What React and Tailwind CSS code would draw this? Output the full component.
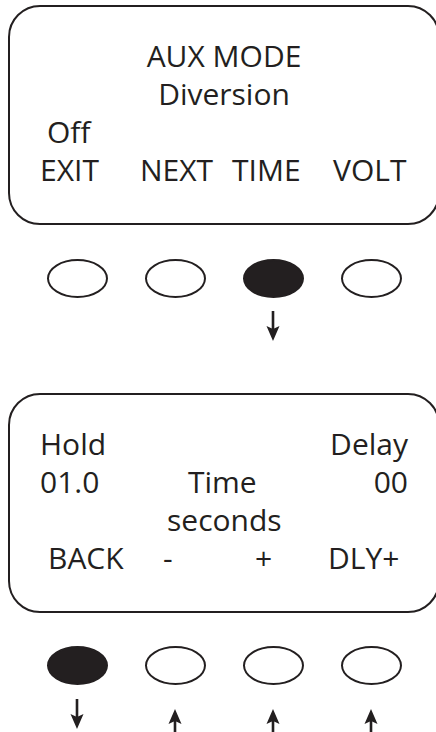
const ink = "#231f20";

function Key({ filled }) {
  return (
    <div className="w-[98px] flex justify-center">
      <div
        className={`w-[61px] h-[39px] rounded-[50%] border-2 border-[#231f20] ${
          filled ? "bg-[#231f20]" : "bg-white"
        }`}
      />
    </div>
  );
}

function Arrow({ dir }) {
  return (
    <div className="w-[98px] flex justify-center">
      {dir && (
        <svg width="14" height="30" viewBox="0 0 14 30">
          {dir === "down" ? (
            <g fill={ink}>
              <rect x="5.7" y="0" width="2.6" height="18" />
              <path d="M0.5 15 L7 18 L13.5 15 L7 30 Z" />
            </g>
          ) : (
            <g fill={ink}>
              <rect x="5.7" y="12" width="2.6" height="18" />
              <path d="M0.5 15 L7 12 L13.5 15 L7 0 Z" />
            </g>
          )}
        </svg>
      )}
    </div>
  );
}

export default function App() {
  return (
    <div
      className="w-[436px] h-[732px] bg-white overflow-hidden text-[#231f20] text-[30px] leading-[38px]"
      style={{ fontFamily: '"Open Sans", sans-serif' }}
    >
      {/* first screen */}
      <div className="ml-[8px] mt-[5px] w-[432px] h-[220px] border-2 border-[#231f20] rounded-[32px] pt-[30px]">
        <div className="ml-[30px] w-[368px]">
          <div className="text-center">AUX MODE</div>
          <div className="text-center">Diversion</div>
          <div className="pl-[7px]">Off</div>
          <div className="flex">
            <span className="w-[100px]">EXIT</span>
            <span className="w-[92px]">NEXT</span>
            <span className="w-[101px]">TIME</span>
            <span>VOLT</span>
          </div>
        </div>
      </div>

      <div className="flex ml-[28px] mt-[34px]">
        <Key />
        <Key />
        <Key filled />
        <Key />
      </div>
      <div className="flex ml-[28px] mt-[13px]">
        <Arrow />
        <Arrow />
        <Arrow dir="down" />
        <Arrow />
      </div>

      {/* second screen */}
      <div className="ml-[8px] mt-[52px] w-[432px] h-[220px] border-2 border-[#231f20] rounded-[32px] pt-[30px]">
        <div className="ml-[30px] w-[368px]">
          <div className="flex justify-between">
            <span>Hold</span>
            <span>Delay</span>
          </div>
          <div className="flex">
            <span className="w-[148px]">01.0</span>
            <span>Time</span>
            <span className="ml-auto">00</span>
          </div>
          <div className="pl-[127px]">seconds</div>
          <div className="flex">
            <span className="w-[123px] pl-[8px]">BACK</span>
            <span className="w-[92px]">-</span>
            <span className="w-[73px]">+</span>
            <span>DLY+</span>
          </div>
        </div>
      </div>

      <div className="flex ml-[28px] mt-[33px]">
        <Key filled />
        <Key />
        <Key />
        <Key />
      </div>
      <div className="flex ml-[28px] mt-[14px] items-start">
        <Arrow dir="down" />
        <div className="mt-[10px] flex">
          <Arrow dir="up" />
          <Arrow dir="up" />
          <Arrow dir="up" />
        </div>
      </div>
    </div>
  );
}
